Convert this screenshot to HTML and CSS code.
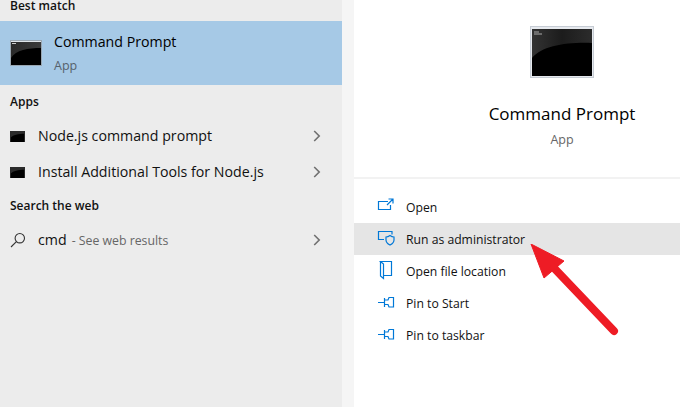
FILE: index.html
```html
<!DOCTYPE html>
<html lang="en">
<head>
<meta charset="utf-8">
<title>Command Prompt search</title>
<link rel="stylesheet" href="styles.css">
</head>
<body>
<div class="screen">
  <section class="results">
    <div class="heading heading-top">Best match</div>
    <div class="best">
      <svg class="cmd-small" viewBox="0 0 32 26"><defs><linearGradient id="g1" x1="0" y1="0" x2="1" y2="0"><stop offset="0" stop-color="#2a2a2a"/><stop offset="1" stop-color="#3a3a3a"/></linearGradient></defs><rect x=".5" y=".5" width="31" height="25" fill="#dfe5ea" stroke="#9aa7b2"/><rect x="1" y="2" width="30" height="23" fill="#000"/><path d="M1 2h30v6C18 8 6 10 1 18z" fill="url(#g1)"/><rect x="2" y="3" width="4" height="1" fill="#ccc"/></svg>
      <div class="best-text">
        <div class="best-name">Command Prompt</div>
        <div class="best-kind">App</div>
      </div>
    </div>
    <div class="heading heading-apps">Apps</div>
    <div class="row">
      <svg class="cmd-tiny" viewBox="0 0 16 12"><rect width="16" height="12" fill="#000"/><path d="M0 0h16v3C9 3 3 4 0 8z" fill="#2b2b2b"/></svg>
      <span class="row-text">Node.js command prompt</span>
      <svg class="chev" viewBox="0 0 8 12"><path d="M1.2 1l5 5-5 5" fill="none" stroke="#707070" stroke-width="1.6"/></svg>
    </div>
    <div class="row">
      <svg class="cmd-tiny" viewBox="0 0 16 12"><rect width="16" height="12" fill="#000"/><path d="M0 0h16v3C9 3 3 4 0 8z" fill="#2b2b2b"/></svg>
      <span class="row-text">Install Additional Tools for Node.js</span>
      <svg class="chev" viewBox="0 0 8 12"><path d="M1.2 1l5 5-5 5" fill="none" stroke="#707070" stroke-width="1.6"/></svg>
    </div>
    <div class="heading heading-web">Search the web</div>
    <div class="row row-web">
      <svg class="search" viewBox="0 0 16 16"><circle cx="9.8" cy="6.200" r="4.700" fill="none" stroke="#333" stroke-width="1.100"/><path d="M6.400 9.600L1 15" fill="none" stroke="#333" stroke-width="1.100"/></svg>
      <span class="row-text">cmd<span class="hint">- See web results</span></span>
      <svg class="chev" viewBox="0 0 8 12"><path d="M1.2 1l5 5-5 5" fill="none" stroke="#707070" stroke-width="1.6"/></svg>
    </div>
  </section>
  <div class="strip"></div>
  <section class="details">
    <div class="hero">
      <svg class="cmd-large" viewBox="0 0 64 52"><defs><linearGradient id="g2" x1="0" y1="0" x2="1" y2="0"><stop offset="0" stop-color="#333"/><stop offset=".5" stop-color="#1c1c1c"/><stop offset="1" stop-color="#2c2c2c"/></linearGradient></defs><rect x=".5" y=".5" width="63" height="51" fill="#e6e9ee" stroke="#c6ccd4"/><rect x="2" y="3" width="60" height="47" fill="#000"/><path d="M2 3h60v14C36 16 12 20 2 32z" fill="url(#g2)"/><path d="M4 6h5M4 8h8" stroke="#aaa" stroke-width="1"/></svg>
      <div class="hero-name">Command Prompt</div>
      <div class="hero-kind">App</div>
    </div>
    <ul class="actions">
      <li class="action">
        <svg class="act-icon" viewBox="0 0 18 18"><path d="M10 3.500H.5v8h12V7M10.500 1h4.500v4.500M15 1L9 7" fill="none" stroke="#0078d7" stroke-width="1.200"/></svg>
        <span>Open</span>
      </li>
      <li class="action action-on">
        <svg class="act-icon" viewBox="0 0 18 18"><path d="M14 4.500V1.500H.5v8H6" fill="none" stroke="#0078d7" stroke-width="1.200"/><path d="M8 7c2 0 3-.7 4-1.400 1 .7 2 1.400 4 1.400v3c0 2.500-2 4-4 5-2-1-4-2.500-4-5z" fill="none" stroke="#0078d7" stroke-width="1.200"/></svg>
        <span>Run as administrator</span>
      </li>
      <li class="action">
        <svg class="act-icon" viewBox="0 0 18 18"><path d="M5.500 13.500h8V-.5H2.500l3 2.500v14.500l-3-2.500V-.5" fill="none" stroke="#0078d7" stroke-width="1.200"/></svg>
        <span>Open file location</span>
      </li>
      <li class="action">
        <svg class="act-icon" viewBox="0 0 18 18"><path d="M0 8.500h6M6.500 4v9M6.500 6h3.500l1-2.500h4.500v9.500H11l-1-2.500H6.500" fill="none" stroke="#0078d7" stroke-width="1.200"/></svg>
        <span>Pin to Start</span>
      </li>
      <li class="action">
        <svg class="act-icon" viewBox="0 0 18 18"><path d="M0 8.500h6M6.500 4v9M6.500 6h3.500l1-2.500h4.500v9.500H11l-1-2.500H6.500" fill="none" stroke="#0078d7" stroke-width="1.200"/></svg>
        <span>Pin to taskbar</span>
      </li>
    </ul>
  </section>
  <svg class="arrow" viewBox="0 0 110 100"><path d="M2 0L35 17 15 34z" fill="#ee1c25" stroke="#ee1c25" stroke-width="1" stroke-linejoin="round"/><path d="M25 24L85 87" fill="none" stroke="#ee1c25" stroke-width="8" stroke-linecap="round"/></svg>
</div>
</body>
</html>
```
FILE: styles.css
```css
* { box-sizing: border-box; }
html, body { margin: 0; padding: 0; }
body { width: 680px; height: 407px; overflow: hidden; background: #fff; font-family: "Open Sans", "Noto Sans", sans-serif; color: #000; }
.screen { position: relative; display: flex; width: 680px; height: 407px; overflow: hidden; }

.results { width: 342px; height: 407px; flex: none; background: #ececec; display: flex; flex-direction: column; }
.strip { width: 12px; height: 407px; flex: none; background: #f5f5f5; }
.heading { font-size: 12px; font-weight: 600; color: #111; padding-left: 10px; display: flex; align-items: center; }
.heading-top { height: 21px; align-items: flex-start; line-height: 12px; }
.heading-apps { height: 33px; }
.heading-web { height: 31px; }

.best { height: 64px; background: #a6c9e6; display: flex; align-items: center; padding-left: 10px; }
.cmd-small { width: 32px; height: 26px; flex: none; margin-right: 12px; }
.best-name { font-size: 14.2px; line-height: 20px; color: #000; }
.best-kind { font-size: 12.5px; line-height: 18px; margin-top: 5px; color: #56616c; }

.row { height: 36px; display: flex; align-items: center; padding-left: 10px; }
.row-web { margin-top: 1px; }
.cmd-tiny { width: 15px; height: 11px; flex: none; margin-right: 13px; }
.search { width: 16px; height: 16px; flex: none; margin-right: 12px; }
.row-text { flex: 1; font-size: 14.2px; color: #111; padding-bottom: 2px; }
.hint { font-size: 12.3px; color: #666; margin-left: 5px; }
.chev { width: 8px; height: 12px; flex: none; margin-right: 21px; }

.details { flex: 1; height: 407px; display: flex; flex-direction: column; background: #fff; }
.hero { height: 179px; border-bottom: 2px solid #f2f2f2; display: flex; flex-direction: column; align-items: center; padding: 26px 0 0 90px; }
.cmd-large { width: 64px; height: 52px; flex: none; }
.hero-name { font-size: 17px; line-height: 24px; margin-top: 24px; color: #000; }
.hero-kind { font-size: 12.5px; line-height: 18px; margin-top: 5px; color: #666; }

.actions { list-style: none; margin: 12px 0 0; padding: 0; }
.action { height: 32px; display: flex; align-items: center; padding-left: 24px; font-size: 12.2px; color: #111; }
.action-on { background: #e5e5e5; }
.act-icon { width: 18px; height: 18px; flex: none; margin-right: 10px; overflow: visible; }

.arrow { position: absolute; left: 529px; top: 244px; width: 110px; height: 100px; }
```
